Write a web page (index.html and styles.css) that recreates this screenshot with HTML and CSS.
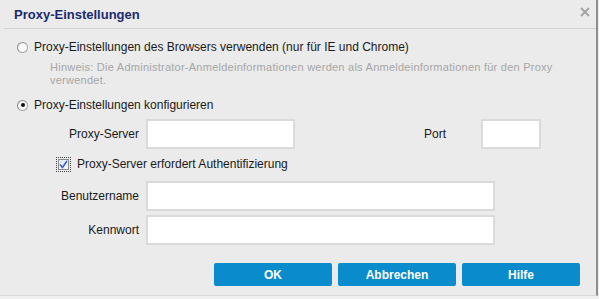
FILE: index.html
```html
<!DOCTYPE html>
<html lang="de">
<head>
<meta charset="utf-8">
<title>Proxy-Einstellungen</title>
<link rel="stylesheet" href="styles.css">
</head>
<body>
<div class="dialog">
  <div class="header">
    <h1 class="title">Proxy-Einstellungen</h1>
    <span class="close" aria-label="Schließen">
      <svg width="10" height="10" viewBox="0 0 10 10"><path d="M1 1 L9 9 M9 1 L1 9" stroke="#a3a3a3" stroke-width="1.8" fill="none"/></svg>
    </span>
  </div>
  <div class="content">
    <div class="radio-row first">
      <span class="radio"></span>
      <span class="radio-text">Proxy-Einstellungen des Browsers verwenden (nur für IE und Chrome)</span>
    </div>
    <p class="hint"><span class="hint-line">Hinweis: Die Administrator-Anmeldeinformationen werden als Anmeldeinformationen für den Proxy</span><span class="hint-line">verwendet.</span></p>
    <div class="radio-row second">
      <span class="radio checked"></span>
      <span class="radio-text">Proxy-Einstellungen konfigurieren</span>
    </div>
    <div class="field-row server-row">
      <span class="label">Proxy-Server</span>
      <span class="input server"></span>
      <span class="port-label">Port</span>
      <span class="input port"></span>
    </div>
    <div class="check-row">
      <span class="check-focus"><span class="checkbox">
        <svg width="9" height="9" viewBox="0 0 9 9"><path d="M1 4.5 L3.5 7.5 L8 1" stroke="#3b5fc4" stroke-width="1.6" fill="none"/></svg>
      </span></span>
      <span class="check-text">Proxy-Server erfordert Authentifizierung</span>
    </div>
    <div class="field-row user-row">
      <span class="label">Benutzername</span>
      <span class="input wide"></span>
    </div>
    <div class="field-row pass-row">
      <span class="label">Kennwort</span>
      <span class="input wide"></span>
    </div>
  </div>
  <div class="footer">
    <button class="btn">OK</button>
    <button class="btn">Abbrechen</button>
    <button class="btn">Hilfe</button>
  </div>
</div>
</body>
</html>
```
FILE: styles.css
```css
html, body {
  margin: 0;
  padding: 0;
  background: #f0f0f0;
}
body {
  font-family: "Liberation Sans", Arial, sans-serif;
  font-size: 12px;
  color: #1a1a1a;
}
.dialog {
  width: 598px;
  height: 296px;
  box-sizing: border-box;
  background: #ebebeb;
  border-right: 2px solid #8e8e8e;
  border-bottom: 1px solid #dadada;
  display: flex;
  flex-direction: column;
}
.header {
  height: 28px;
  margin: 0 0 0 4px;
  padding: 0 6px 0 10px;
  border-bottom: 1px solid #d2d2d2;
  display: flex;
  align-items: center;
  justify-content: space-between;
}
.title {
  margin: 0;
  font-size: 13px;
  font-weight: bold;
  color: #1b2a6e;
  padding-top: 1px;
}
.close {
  display: flex;
  align-items: center;
  margin-top: -5px;
}
.content {
  padding-left: 17px;
  display: flex;
  flex-direction: column;
}
.radio-row {
  display: flex;
  align-items: center;
  height: 14px;
}
.radio-row.first { margin-top: 11px; }
.radio-row.second { margin-top: 12px; }
.radio {
  width: 9px;
  height: 9px;
  border-radius: 50%;
  border: 1px solid #a9a9a9;
  border-top-color: #8f8f8f;
  border-left-color: #8f8f8f;
  background: radial-gradient(circle at 60% 60%, #ffffff 0%, #f4f4f4 60%, #e2e2e2 100%);
  position: relative;
  flex: none;
}
.radio.checked::after {
  content: "";
  position: absolute;
  left: 2.5px;
  top: 2.5px;
  width: 4px;
  height: 4px;
  border-radius: 50%;
  background: #111;
}
.radio-text {
  margin-left: 6px;
}
.hint {
  margin: 7px 0 0 33px;
  font-family: "Liberation Sans", Arial, sans-serif;
  font-size: 11px;
  letter-spacing: 0.25px;
  color: #a6a6a6;
  display: flex;
  flex-direction: column;
}
.hint-line {
  display: block;
  height: 12.5px;
  line-height: 12.5px;
}
.field-row {
  display: flex;
  align-items: center;
}
.server-row { margin-top: 7px; }
.user-row { margin-top: 9px; }
.pass-row { margin-top: 4px; }
.label {
  width: 122px;
  text-align: right;
  padding-right: 7px;
  flex: none;
}
.input {
  height: 30px;
  box-sizing: border-box;
  background: #fff;
  border: 2px solid #dadada;
  flex: none;
}
.input.server { width: 149px; }
.input.port { width: 60px; }
.input.wide { width: 349px; }
.port-label {
  margin-left: 129px;
  width: 57px;
}
.check-row {
  display: flex;
  align-items: center;
  margin-top: 7px;
  margin-left: 39px;
  height: 16px;
}
.check-focus {
  display: flex;
  align-items: center;
  justify-content: center;
  width: 13px;
  height: 13px;
  border: 1px dotted #444;
}
.checkbox {
  width: 11px;
  height: 11px;
  box-sizing: border-box;
  border: 1px solid #8c8c8c;
  background: linear-gradient(135deg, #dfe6f5, #f7f9fd);
  display: flex;
  align-items: center;
  justify-content: center;
}
.check-text {
  margin-left: 6px;
}
.footer {
  margin-top: 18px;
  padding-right: 16px;
  display: flex;
  justify-content: flex-end;
  gap: 6px;
}
.btn {
  width: 118px;
  height: 23px;
  border: none;
  border-radius: 2px;
  background: #0a8bcb;
  color: #fff;
  font-family: "Liberation Sans", Arial, sans-serif;
  font-size: 12px;
  font-weight: bold;
  padding: 0;
}
```
